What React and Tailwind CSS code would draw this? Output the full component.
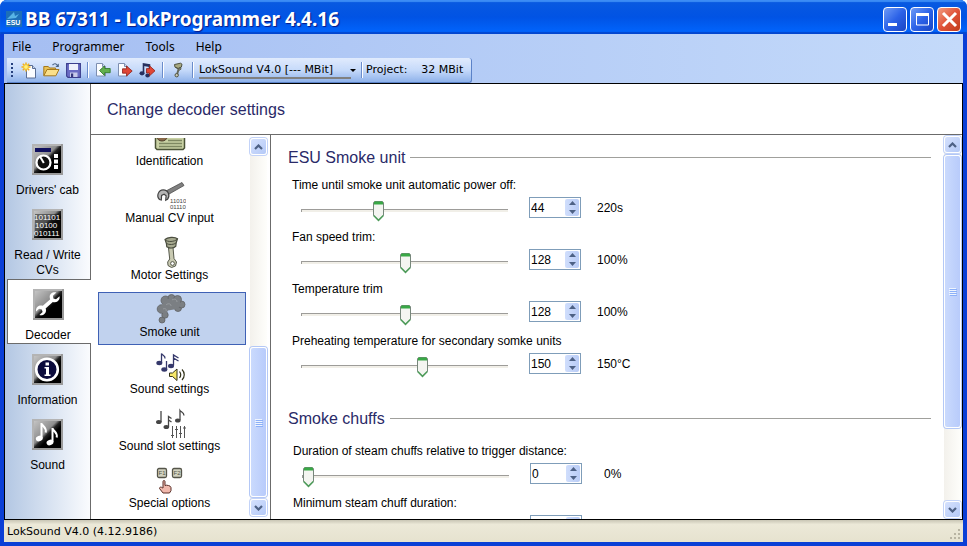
import { useState } from 'react'
import clsx from 'clsx'

const MENU = ['File', 'Programmer', 'Tools', 'Help']

const FIELDS_UNIT = [
  { id: 'power-off', label: 'Time until smoke unit automatic power off:', value: 44, max: 121, unit: '220s' },
  { id: 'fan', label: 'Fan speed trim:', value: 128, max: 255, unit: '100%' },
  { id: 'temp', label: 'Temperature trim', value: 128, max: 255, unit: '100%' },
  { id: 'preheat', label: 'Preheating temperature for secondary somke units', value: 150, max: 255, unit: '150°C' },
]

const FIELDS_CHUFFS = [
  { id: 'duration', label: 'Duration of steam chuffs relative to trigger distance:', value: 0, max: 255, unit: '0%' },
  { id: 'minimum', label: 'Minimum steam chuff duration:', value: '', max: 255 },
]

/* ---------- toolbar icons ---------- */

function NewIcon() {
  return (
    <svg width="16" height="17" viewBox="0 0 16 17">
      <path d="M5.500 3.500h6l3 3v9.500h-9z" fill="#fbfcff" stroke="#5b6f96" />
      <path d="M11.500 3.500v3h3" fill="#c5d3ee" stroke="#5b6f96" />
      <path d="M5 .5v9M.5 5h9M1.800 1.800l6.400 6.400M8.200 1.800L1.800 8.200" stroke="#f0b020" strokeWidth="1.500" />
      <circle cx="5" cy="5" r="2.400" fill="#fff27a" stroke="#f5c02c" />
    </svg>
  )
}

function OpenIcon() {
  return (
    <svg width="17" height="16" viewBox="0 0 17 16">
      <path d="M.8 13.500V4.500h4.500l1.300 1.500h6v2" fill="#e9c255" stroke="#a5791d" />
      <path d="M.8 13.800L4 7.500h12l-3.200 6.300z" fill="#fbe08a" stroke="#a5791d" />
      <path d="M9.500 3.200c1.600-2.200 4-1.800 5 .4" fill="none" stroke="#4a6283" strokeWidth="1.200" />
      <path d="M15.800 1.500v3.600h-3.400z" fill="#4a6283" />
    </svg>
  )
}

function SaveIcon() {
  return (
    <svg width="15" height="15" viewBox="0 0 15 15">
      <path d="M.6 .6h13.800v13.800H2L.6 13z" fill="#6a6cc4" stroke="#3c3f8e" strokeWidth="1.100" />
      <path d="M3 1h9v6H3z" fill="#eef1fc" />
      <path d="M4 9.500h7.500V14H4z" fill="#c6caea" />
      <path d="M5 10.500h2.200V14H5z" fill="#34367c" />
    </svg>
  )
}

function ImportIcon() {
  return (
    <svg width="16" height="16" viewBox="0 0 16 16">
      <path d="M1.500 1.500h6l3 3v9.500h-9z" fill="#fcfdff" stroke="#7d8eb0" />
      <path d="M7.500 1.500v3h3" fill="#cbd7ee" stroke="#7d8eb0" />
      <path d="M4.500 8.500l5-4.500v2.500h5.700v4.200H9.500v2.800z" fill="#62b04e" stroke="#2c7427" strokeWidth=".8" />
    </svg>
  )
}

function ExportIcon() {
  return (
    <svg width="16" height="16" viewBox="0 0 16 16">
      <path d="M1.500 1.500h6l3 3v9.500h-9z" fill="#fcfdff" stroke="#7d8eb0" />
      <path d="M7.500 1.500v3h3" fill="#cbd7ee" stroke="#7d8eb0" />
      <path d="M5.500 6.800h4V4l5.700 5-5.700 5v-2.800h-4z" fill="#e04636" stroke="#8e2119" strokeWidth=".8" />
    </svg>
  )
}

function MusicExportIcon() {
  return (
    <svg width="17" height="16" viewBox="0 0 17 16">
      <path d="M4.500 11V2l6 1v4" fill="none" stroke="#27305f" strokeWidth="1.600" />
      <path d="M4.500 2l6 1v2l-6-1z" fill="#27305f" />
      <ellipse cx="3" cy="11.300" rx="2.500" ry="2.100" fill="#27305f" />
      <ellipse cx="8.600" cy="13.500" rx="2.300" ry="1.900" fill="#27305f" />
      <path d="M7.500 6.600h3V3.800l5.500 5-5.500 5V11h-3z" fill="#e04636" stroke="#8e2119" strokeWidth=".8" />
    </svg>
  )
}

function PistonSmallIcon() {
  return (
    <svg width="12" height="16" viewBox="0 0 12 16">
      <path d="M2.500 2.500l6-1.300 1.500 1-.6 2.800-3.200 1.400-3.200-1.200z" fill="#a8aa82" stroke="#4e5140" />
      <path d="M4 5.500l2 1.500 2.800-1.500v1.800L6.500 8.500" fill="none" stroke="#4e5140" />
      <path d="M6.800 6.500L5.200 12" stroke="#66695a" strokeWidth="2" />
      <circle cx="4.700" cy="13.200" r="1.700" fill="#c9cab5" stroke="#4e5140" />
    </svg>
  )
}

/* ---------- sidebar icons ---------- */

function Tile({ id, children }) {
  return (
    <svg width="31" height="31" viewBox="0 0 31 31">
      <defs>
        <linearGradient id={id} x1="0" y1="0" x2="1" y2="1">
          <stop offset="0" stopColor="#c4c4c4" />
          <stop offset=".42" stopColor="#8e8e8e" />
          <stop offset=".5" stopColor="#222" />
          <stop offset=".6" stopColor="#000" />
        </linearGradient>
      </defs>
      <path d="M0 0h31v31H0z" fill="#b4b4b4" />
      <path d="M2 2h27v27H2z" fill={`url(#${id})`} />
      <path d="M29 0h2v31H0v-2h29z" fill="#9a9a9a" />
      {children}
    </svg>
  )
}

function CabIcon() {
  return (
    <Tile id="cab">
      <path d="M3 4h16v4H3z" fill="#10105e" />
      <circle cx="11.500" cy="18.500" r="7" fill="#111" stroke="#fff" strokeWidth="2.200" />
      <path d="M11.800 19L8 12.500" stroke="#fff" strokeWidth="2" />
      <path d="M22 10h4v4h-4zM22 15.500h4v4h-4zM22 21h4v4h-4z" fill="#fff" />
    </Tile>
  )
}

function BitsIcon() {
  return (
    <Tile id="bits">
      <path d="M3 5h25v22H3z" fill="#111" opacity=".5" />
      <g fill="#fff" fontFamily="Liberation Sans" fontSize="8">
        <text x="2" y="11">101101</text>
        <text x="3" y="19">10100</text>
        <text x="2" y="27">010111</text>
      </g>
    </Tile>
  )
}

function WrenchIcon() {
  return (
    <Tile id="wrench">
      <path
        d="M26.500 7.200l-3.500 3-2.600-.8-.5-2.600 3.400-3.200c-3.300-1-6.600 1.200-6.600 4.300 0 .9.200 1.600.5 2.300l-7.400 6.600c-.7-.3-1.300-.4-2-.4-3 0-5.300 2.600-4.700 6l3-2.700 2.700.7.800 2.600-3.200 3c3.500 1 6.800-1.500 6.600-4.800 0-.7-.1-1.200-.4-1.800l7.200-6.500c.7.300 1.400.4 2.200.3 3-.2 5.200-3 4.500-6z"
        fill="#fff"
      />
    </Tile>
  )
}

function InfoIcon() {
  return (
    <Tile id="info">
      <circle cx="15" cy="15.500" r="10.800" fill="#0c0c3c" stroke="#fff" strokeWidth="2.600" />
      <path d="M13.500 8.500h3.500v3h-3.500zM12.500 13H17v7.500h1.500v1.500h-6v-1.500H14v-6h-1.500z" fill="#fff" />
    </Tile>
  )
}

function NotesIcon() {
  return (
    <Tile id="notes">
      <path d="M9.500 19V4c.3 3 5.500 4 4.200 9.500M20.500 23V9c.3 3 5.500 4 4.200 9.500" fill="none" stroke="#fff" strokeWidth="2" />
      <ellipse cx="7.300" cy="19.500" rx="3.500" ry="2.700" fill="#fff" transform="rotate(-20 7.300 19.500)" />
      <ellipse cx="18" cy="23.500" rx="3.500" ry="2.700" fill="#fff" transform="rotate(-20 18 23.500)" />
    </Tile>
  )
}

/* ---------- list icons, all on a 32px grid ---------- */

function Glyph({ children }) {
  return <svg width="32" height="32" viewBox="0 0 32 32">{children}</svg>
}

function CardIcon() {
  return (
    <Glyph>
      <path d="M1.500 6h29v20l-1.500 1.500H3L1.500 26z" fill="#c9d1a4" stroke="#4a5236" strokeWidth="1.500" />
      <ellipse cx="8" cy="15" rx="5" ry="4" fill="#8a6a4a" stroke="#4a3b2a" />
      <path d="M14 18.500h14M5 21.500h23M5 24.500h23" stroke="#7e8862" strokeWidth="1.300" />
    </Glyph>
  )
}

function CvIcon() {
  return (
    <Glyph>
      <path d="M11 12.500L28 3.500l2 3-16.600 9.500z" fill="#808080" stroke="#4c4c4c" strokeWidth=".8" />
      <path d="M5.500 20.500c-3.500-3.500-1-9.600 3.700-9.600 5.100 0 7.300 5.600 4.300 9.400l-1.800 1 .4-4.600-2-1.500-2.500 1.200-.3 4.600z" fill="#b5b5b5" stroke="#444" strokeWidth="1.200" />
      <g fill="#444" fontFamily="Liberation Sans" fontSize="6">
        <text x="16" y="24">11010</text>
        <text x="16" y="30">01110</text>
      </g>
    </Glyph>
  )
}

function PistonIcon() {
  return (
    <Glyph>
      <path d="M14.500 12l4.500-.5 1 11 2.500 3.500-1 4-4 1.500-3.500-2-.3-3.500 2-3z" fill="#c9cab2" stroke="#55584a" />
      <path d="M11 3.500c2.500-2.500 9.500-3 12.500-.8l-1.300 4-.4 3.500c-2.500 2.300-6.500 2.300-9 .6l-.4-3.300z" fill="#a6a98f" stroke="#4b4e40" strokeWidth="1.200" />
      <path d="M11 3.800c3 2.500 9 2.200 12.300-.6M12.400 7.500c3 1.600 7.300 1.300 9.800-.6" fill="none" stroke="#4b4e40" />
      <circle cx="18.500" cy="27.500" r="1.900" fill="#fff" stroke="#55584a" />
    </Glyph>
  )
}

function SmokeIcon() {
  return (
    <Glyph>
      <g fill="#7b7f83" stroke="#5f6265" strokeWidth=".8">
        <circle cx="8" cy="27" r="3" />
        <circle cx="11" cy="22" r="3.200" />
        <circle cx="7.500" cy="16" r="4.300" />
        <circle cx="24" cy="15" r="3.500" />
        <circle cx="27.500" cy="11.500" r="3.500" />
        <circle cx="11.500" cy="7.500" r="4.500" />
        <circle cx="17.500" cy="5" r="3.500" />
        <circle cx="23.500" cy="6.500" r="4" />
      </g>
      <path d="M8 12l5-6 12-1 2 7-4 4-9 1.500-3 5-3-3z" fill="#7b7f83" />
      <path d="M12 12c2-2 5-1.500 5 1M18 7c2-1.500 5-1 5 2M9 16c2-1 4 0 3 2" fill="none" stroke="#989ca0" />
    </Glyph>
  )
}

function SoundIcon() {
  return (
    <Glyph>
      <g fill="none" stroke="#35386b" strokeWidth="1.300">
        <path d="M7.500 13V3.500c1 2 4 2 3.500 5M12.500 20V11M19.500 15.500V5l5 3M19.500 8l5 3" />
      </g>
      <g fill="#35386b">
        <ellipse cx="5.300" cy="13" rx="3" ry="2.200" />
        <ellipse cx="10.300" cy="19.500" rx="3" ry="2.200" />
        <ellipse cx="17" cy="16" rx="3" ry="2.200" />
      </g>
      <path d="M15.500 23h3l4.500-4v11.500l-4.500-4h-3z" fill="#f7e869" stroke="#33331a" />
      <path d="M25.500 21.500c1.500 2 1.500 4.500 0 6.500M28 19.500c3 3 3 7.500 0 10.500" fill="none" stroke="#33331a" strokeWidth="1.200" />
    </Glyph>
  )
}

function SlotIcon() {
  return (
    <Glyph>
      <path d="M7 15V4M14.500 20V9.500l3 2M14.500 13l3 2M26 13V3.500c1 1.500 4 2 4 5" fill="none" stroke="#454545" strokeWidth="1.300" />
      <g fill="#454545">
        <ellipse cx="4.800" cy="15" rx="2.800" ry="2" />
        <ellipse cx="12.300" cy="20" rx="2.800" ry="2" />
        <ellipse cx="23.800" cy="13.500" rx="2.800" ry="2" />
      </g>
      <path d="M18.500 19v12M22.500 19v12M26.500 19v12M30.500 19v12M17 28.500h3M21 22.500h3M25 26.500h3M29 21h3" stroke="#555" />
    </Glyph>
  )
}

function SpecialIcon() {
  return (
    <Glyph>
      <rect x="3.500" y="4.500" width="9" height="9" rx="1.500" fill="#d2d2c0" stroke="#55554a" strokeWidth="1.300" />
      <rect x="18.500" y="4.500" width="9" height="9" rx="1.500" fill="#d2d2c0" stroke="#55554a" strokeWidth="1.300" />
      <g fill="#55554a" fontFamily="Liberation Sans" fontSize="6">
        <text x="4.500" y="11.200">F1</text>
        <text x="19.500" y="11.200">F2</text>
      </g>
      <path d="M9 24v-6.500c0-1.300 2-1.300 2 0v4l1.500-.3 2 .3 1.500.6 1 1.500v3L15.500 29H9L5.500 24.500c0-1.600 1.700-1.800 2.600-.8z" fill="#f0b8ac" stroke="#5a2f28" />
    </Glyph>
  )
}

const NAV = [
  { name: "Drivers' cab", Icon: CabIcon },
  { name: 'Read / Write CVs', Icon: BitsIcon },
  { name: 'Decoder', Icon: WrenchIcon },
  { name: 'Information', Icon: InfoIcon },
  { name: 'Sound', Icon: NotesIcon },
]

const PAGES = [
  { name: 'Identification', Icon: CardIcon },
  { name: 'Manual CV input', Icon: CvIcon },
  { name: 'Motor Settings', Icon: PistonIcon },
  { name: 'Smoke unit', Icon: SmokeIcon },
  { name: 'Sound settings', Icon: SoundIcon },
  { name: 'Sound slot settings', Icon: SlotIcon },
  { name: 'Special options', Icon: SpecialIcon },
]

/* ---------- window chrome ---------- */

function TitleBar() {
  const button = 'flex h-[25px] w-6 items-center justify-center rounded-[4px] border border-white'
  return (
    <header className="flex h-[34px] shrink-0 items-center gap-[3px] bg-linear-to-b from-[#0a5ae0] via-[#0153e4] to-[#0166ff] pt-1 pr-[6px] pl-[6px] shadow-[inset_0_2px_1px_#3c8cf5,inset_0_-2px_1px_#0246d0]">
      <svg width="16" height="16" viewBox="0 0 16 16">
        <path d="M0 0h16v16H0z" fill="#1d6fb8" />
        <path d="M8 1l1 4 4-2-3 4-9 1z" fill="#58b4e6" />
        <text x="0" y="14" fill="#fff" fontFamily="Liberation Sans" fontWeight="bold" fontSize="7">ESU</text>
      </svg>
      <h1 className="grow font-['Noto_Sans'] text-[19px] leading-6 font-bold text-white [text-shadow:1px_1px_1px_#0a1883]">
        BB 67311 - LokProgrammer 4.4.16
      </h1>
      <button aria-label="Minimize" className={clsx(button, 'bg-linear-to-br from-[#6f9af5] via-[#2c62e8] to-[#1a45c4]')}>
        <svg width="17" height="17"><path d="M1 12h9v3H1z" fill="#fff" /></svg>
      </button>
      <button aria-label="Maximize" className={clsx(button, 'bg-linear-to-br from-[#6f9af5] via-[#2c62e8] to-[#1a45c4]')}>
        <svg width="17" height="17"><path d="M2.500 3v11h12V3M2 3.500h13" fill="none" stroke="#fff" /><path d="M2 2h13v3H2z" fill="#fff" /></svg>
      </button>
      <button aria-label="Close" className={clsx(button, 'bg-linear-to-br from-[#f09a80] via-[#e0533a] to-[#c03a18]')}>
        <svg width="17" height="17"><path d="M2 2l13 13M15 2L2 15" stroke="#fff" strokeWidth="3" /></svg>
      </button>
    </header>
  )
}

function Divider() {
  return <div className="h-4 w-[2px] border-r border-white bg-[#6a8ccb]" />
}

function ToolBar() {
  return (
    <div className="flex h-[25px] w-fit items-center rounded-r-[3px] border-r border-b border-[#5b82c8] bg-linear-to-b from-[#e1ebfd] via-[#c6dafa] to-[#8fb2ea] pr-2 font-['DejaVu_Sans',sans-serif] text-[11px] text-black">
      <div className="mr-2 ml-1 h-[15px] w-[2px] bg-[repeating-linear-gradient(#27417e_0_2px,transparent_2px_4px)]" />
      <div className="flex items-center gap-[6px]">
        <button aria-label="New project"><NewIcon /></button>
        <button aria-label="Open project"><OpenIcon /></button>
        <button aria-label="Save project"><SaveIcon /></button>
        <Divider />
        <button aria-label="Import"><ImportIcon /></button>
        <button aria-label="Export"><ExportIcon /></button>
        <button aria-label="Export sound"><MusicExportIcon /></button>
        <Divider />
        <button aria-label="Motor" className="px-[2px]"><PistonSmallIcon /></button>
        <Divider />
      </div>
      <div className="relative ml-[5px] flex items-center">
        <select aria-label="Decoder type" className="mr-[5px] h-[17px] w-[152px] appearance-none border-b-2 border-[#808080] leading-[15px]">
          <option>LokSound V4.0 [--- MBit]</option>
        </select>
        <svg className="pointer-events-none absolute right-0" width="6" height="3"><path d="M0 0h6L3 3z" /></svg>
      </div>
      <div className="ml-[5px] flex items-center gap-[3px]">
        <Divider />
        <span>Project:</span>
        <span className="ml-[11px]">32 MBit</span>
      </div>
    </div>
  )
}

function Chevron({ up }) {
  return (
    <svg width="9" height="6" viewBox="0 0 9 6">
      <path d={up ? 'M1 5l3.500-3.500L8 5' : 'M1 1l3.500 3.500L8 1'} fill="none" stroke="#4d6185" strokeWidth="2.200" />
    </svg>
  )
}

function ScrollBar({ before, thumb, after }) {
  const button = 'flex h-[17px] shrink-0 items-center justify-center rounded-[3px] border border-white bg-linear-to-br from-[#d5e1fd] to-[#b4c9f7] shadow-[0_0_0_1px_#c3d3f8]'
  return (
    <div className="flex w-[17px] shrink-0 flex-col gap-px bg-linear-to-r from-[#f3f1ec] to-[#fefefb]">
      <button aria-label="Scroll up" className={button}><Chevron up /></button>
      <div className={before} />
      <div className={clsx('flex flex-col items-center justify-center gap-px rounded-[3px] border border-white bg-linear-to-r from-[#cadafd] to-[#b8cbfb] shadow-[0_0_0_1px_#b4c8f6]', thumb)}>
        {[0, 1, 2, 3].map(i => <div key={i} className="h-px w-[7px] bg-[#eef4fe] shadow-[1px_1px_0_#8cb0f8]" />)}
      </div>
      <div className={after} />
      <button aria-label="Scroll down" className={button}><Chevron /></button>
    </div>
  )
}

/* ---------- form ---------- */

function Field({ id, label, value: initial, max, unit, unitClass }) {
  const [value, setValue] = useState(initial)
  const change = v => setValue(Math.min(max, Math.max(0, Number(v))))

  return (
    <div className="flex flex-col gap-1">
      <label htmlFor={id} className="leading-4">{label}</label>
      <div className="flex h-[21px] items-start">
        <div className="relative ml-[9px] h-[21px] w-[207px] px-[6px]">
          <input
            type="range"
            aria-label={label}
            min="0"
            max={max}
            value={Number(value)}
            onChange={e => change(e.target.value)}
            className="absolute inset-x-0 top-3 block h-[3px] w-full appearance-none border-t border-l border-[#9d9c99] bg-[#f1efe8] [&::-webkit-slider-thumb]:h-5 [&::-webkit-slider-thumb]:w-[11px] [&::-webkit-slider-thumb]:appearance-none [&::-webkit-slider-thumb]:opacity-0"
          />
          <div className="pointer-events-none relative h-full">
            <svg
              className="absolute top-1 -ml-[5px]"
              style={{ left: `${(value / max) * 100}%` }}
              width="11"
              height="21"
              viewBox="0 0 11 21"
            >
              <path d="M.5 1.500l1-1h8l1 1v13l-5 5-5-5z" fill="#f4f5f1" stroke="#77877b" />
              <path d="M1 3.500V1l1-.5h7l1 .5v2.500z" fill="#39a846" />
              <path d="M.7 14.500l4.800 4.800 4.800-4.800" fill="none" stroke="#4c9a58" strokeWidth="1.600" />
            </svg>
          </div>
        </div>
        <div className="ml-[21px] flex h-[21px] w-[52px] border border-[#7f9db9] bg-white py-px pr-px">
          <input
            id={id}
            type="number"
            value={value}
            onChange={e => change(e.target.value)}
            className="w-0 grow appearance-none pt-px pl-px outline-none [&::-webkit-inner-spin-button]:hidden"
          />
          <div className="flex w-[14px] flex-col rounded-[2px] bg-linear-to-r from-[#d0defc] to-[#b9ccf6]">
            <button aria-label="Increase" className="flex grow items-center justify-center" onClick={() => change(Number(value) + 1)}>
              <svg width="7" height="4"><path d="M0 4l3.500-4L7 4z" fill="#4d6185" /></svg>
            </button>
            <button aria-label="Decrease" className="flex grow items-center justify-center" onClick={() => change(Number(value) - 1)}>
              <svg width="7" height="4"><path d="M0 0h7L3.500 4z" fill="#4d6185" /></svg>
            </button>
          </div>
        </div>
        {unit && <output htmlFor={id} className={clsx('leading-[23px]', unitClass)}>{unit}</output>}
      </div>
    </div>
  )
}

function SectionTitle({ children }) {
  return (
    <div className="flex h-5 items-center gap-[5px]">
      <h3 className="pt-px text-[16px] leading-5 text-[#2a2a68]">{children}</h3>
      <div className="h-px grow bg-[#a0a09c]" />
    </div>
  )
}

export default function App() {
  const [section, setSection] = useState('Decoder')
  const [page, setPage] = useState('Smoke unit')

  return (
    <div className="flex h-screen flex-col overflow-hidden rounded-t-[7px] bg-[#0a3fd6] font-['Liberation_Sans',sans-serif] text-[12px] text-black">
      <TitleBar />
      <div className="mx-1 mb-1 flex min-h-0 grow flex-col">
        <div className="shrink-0 bg-linear-to-r from-[#a5bef2] to-[#c4dafa] font-['Noto_Sans',sans-serif]">
          <nav className="flex h-6 items-center gap-[21px] pt-px pl-2 text-[12px]">
            {MENU.map(item => <button key={item}>{item}</button>)}
          </nav>
          <div className="pl-[3px]"><ToolBar /></div>
        </div>

        <div className="flex min-h-0 grow border border-black bg-white">
          {/* Section tabs */}
          <nav className="flex w-[86px] shrink-0 flex-col bg-linear-to-r from-[#b3c7e3] to-[#fbfcfe]">
            <div className="h-[50px] shrink-0 border-r border-[#6b6b6b]" />
            {NAV.map(({ name, Icon }) => (
              <button
                key={name}
                onClick={() => setSection(name)}
                className={clsx(
                  'flex flex-col items-center gap-2 pt-[10px] pb-px leading-[15px]',
                  name === section
                    ? 'ml-[2px] bg-white pr-[2px] shadow-[inset_1px_1px_0_#6b6b6b,inset_0_-1px_0_#6b6b6b]'
                    : 'border-r border-[#6b6b6b]'
                )}
              >
                <Icon />
                <span className="w-[72px]">{name}</span>
              </button>
            ))}
            <div className="grow border-r border-[#6b6b6b]" />
          </nav>

          <div className="flex min-w-0 grow flex-col">
            <div className="flex h-[51px] shrink-0 items-center border-b border-[#6b6b6b] pt-[2px] pl-4">
              <h2 className="text-[16px] text-[#2a2a68]">Change decoder settings</h2>
            </div>

            <div className="flex min-h-0 grow">
              {/* Settings pages, scrolled to the end */}
              <div className="flex w-[180px] shrink-0 border-r border-[#6b6b6b] pt-[3px] pr-[3px] pb-[3px] pl-[7px]">
                <div className="flex min-w-0 grow flex-col justify-end gap-1 overflow-hidden pr-1">
                  {PAGES.map(({ name, Icon }) => (
                    <button
                      key={name}
                      onClick={() => setPage(name)}
                      className={clsx(
                        'flex h-[53px] shrink-0 flex-col items-center border pr-[5px] leading-[14px]',
                        name === page ? 'border-[#3f61b5] bg-[#c1d2ee]' : 'border-transparent'
                      )}
                    >
                      <Icon />
                      <span>{name}</span>
                    </button>
                  ))}
                </div>
                <ScrollBar before="flex-[191]" thumb="flex-[148]" after="flex-[0]" />
              </div>

              <div className="flex min-w-0 grow">
                <main className="flex min-w-0 grow flex-col gap-[34px] overflow-hidden pt-3 pr-[13px] pl-[17px]">
                  <section className="flex flex-col gap-[10px]">
                    <SectionTitle>ESU Smoke unit</SectionTitle>
                    <div className="flex flex-col gap-[11px] pl-1">
                      {FIELDS_UNIT.map(f => <Field key={f.id} {...f} unitClass="ml-4" />)}
                    </div>
                  </section>
                  <section className="flex flex-col gap-[15px]">
                    <SectionTitle>Smoke chuffs</SectionTitle>
                    <div className="flex flex-col gap-[11px] pl-[5px]">
                      {FIELDS_CHUFFS.map(f => <Field key={f.id} {...f} unitClass="ml-[22px]" />)}
                    </div>
                  </section>
                </main>
                <div className="flex py-px pr-px">
                  <ScrollBar before="flex-[0]" thumb="flex-[275]" after="flex-[72]" />
                </div>
              </div>
            </div>
          </div>
        </div>

        <footer className="flex h-[22px] shrink-0 items-center justify-between bg-linear-to-b from-[#c9c6b5] via-[#ece9d8] via-20% to-[#e6e2cf] pt-[2px] pl-[3px] font-['DejaVu_Sans',sans-serif] text-[11px]">
          <span>LokSound V4.0 (4.12.9186)</span>
          <svg className="self-end" width="13" height="13" viewBox="0 0 13 13">
            <path d="M8 0h2v2H8zM4 4h2v2H4zM8 4h2v2H8zM0 8h2v2H0zM4 8h2v2H4zM8 8h2v2H8z" fill="#b8b4a2" />
          </svg>
        </footer>
      </div>
    </div>
  )
}
